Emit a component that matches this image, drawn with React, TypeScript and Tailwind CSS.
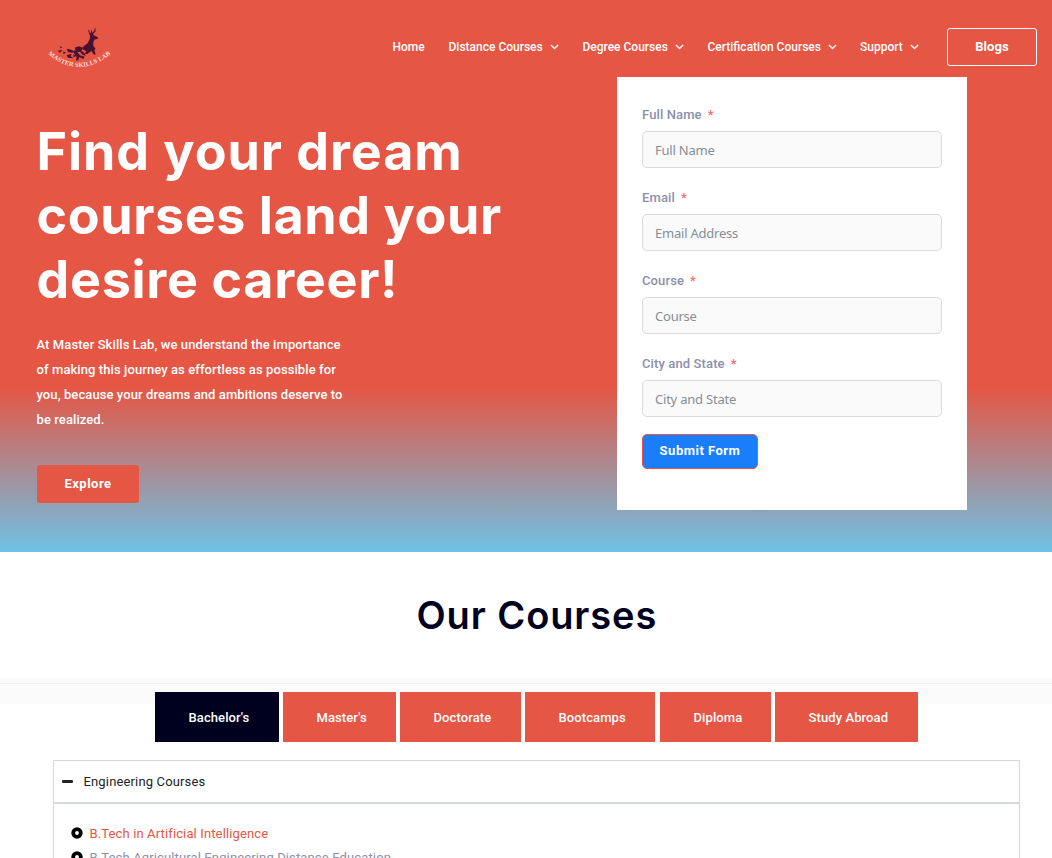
import React from "react";

const navItems = [
  { label: "Home", box: "w-[56px]", menu: false },
  { label: "Distance Courses", box: "w-[134px]", menu: true },
  { label: "Degree Courses", box: "w-[125px]", menu: true },
  { label: "Certification Courses", box: "w-[152.5px]", menu: true },
  { label: "Support", box: "w-[87px]", menu: true },
];

const fields = [
  { label: "Full Name", hint: "Full Name" },
  { label: "Email", hint: "Email Address" },
  { label: "Course", hint: "Course" },
  { label: "City and State", hint: "City and State" },
];

const tabs = [
  { label: "Bachelor's", box: "w-[124px] mr-[4px] bg-[#00001f]" },
  { label: "Master's", box: "w-[113px] mr-[4px] bg-[#e55644]" },
  { label: "Doctorate", box: "w-[121px] mr-[4px] bg-[#e55644]" },
  { label: "Bootcamps", box: "w-[130px] mr-[5px] bg-[#e55644]" },
  { label: "Diploma", box: "w-[111px] mr-[4px] bg-[#e55644]" },
  { label: "Study Abroad", box: "w-[143px] bg-[#e55644]" },
];

function Chevron() {
  return (
    <svg width="9" height="6" viewBox="0 0 9 6" fill="none" className="shrink-0">
      <path d="M0.9 1 L4.5 4.5 L8.1 1" stroke="#fff" strokeOpacity="0.9" strokeWidth="1.6" />
    </svg>
  );
}

function Logo() {
  return (
    <svg width="100" height="65" viewBox="0 0 300 195" className="ml-[30px] mt-[15px] shrink-0">
      <defs>
        <path id="arc" d="M53 117 Q 147 196 245 115" />
      </defs>
      <path
        fill="#4a1030"
        d="M180 63 L178 57 L174 46 L176 44 L180 53 L183 55 L183 46 L185 44 L187 53 L192 49 L195 39 L197 40 L196 50 L190 56 L191 61 L204 67 L203 71 L193 74 L190 81 L190 92 L197 102 L193 105 L197 118 L192 119 L184 108 L172 117 L164 116 L169 108 L157 103 L161 94 L173 85 L179 73 Z"
      />
      <path
        fill="#4a1030"
        d="M134 98 L146 94 L160 98 L154 107 L163 114 L168 122 L158 120 L150 110 L142 112 L150 121 L164 125 L160 132 L148 127 L144 136 L138 137 L140 126 L133 116 L128 108 L137 106 Z M110 101 L128 105 L129 113 L114 112 Z M91 93 L97 98 L91 100 Z M83 107 L98 105 L90 113 Z M99 110 L108 112 L101 118 Z M110 121 L125 116 L122 124 L130 130 L114 128 Z M130 118 L139 123 L130 127 Z M162 98 L174 94 L176 110 L166 108 Z"
      />
      <text fill="#ffdcd5" className="font-['Liberation_Serif'] text-[19px] font-bold">
        <textPath href="#arc" startOffset="1" textLength="208" lengthAdjust="spacingAndGlyphs">
          MASTER SKILLS LAB
        </textPath>
      </text>
    </svg>
  );
}

function Header() {
  return (
    <header className="flex h-[77px] items-start">
      <Logo />
      <nav className="ml-[262.5px] flex h-[94px] shrink-0 items-center text-[12px] font-medium">
        {navItems.map((n) => (
          <a key={n.label} className={"flex shrink-0 items-center gap-[7px] whitespace-nowrap " + n.box}>
            <span>{n.label}</span>
            {n.menu && <Chevron />}
          </a>
        ))}
      </nav>
      <a className="mt-[28px] flex h-[38px] w-[90px] shrink-0 items-center justify-center rounded-[3px] border border-white text-[13px] font-bold tracking-[0.1px]">
        Blogs
      </a>
    </header>
  );
}

function EnquiryForm() {
  return (
    <form className="ml-auto mr-[85px] h-[433px] w-[350px] shrink-0 bg-white pl-[25px] pt-[29px]">
      {fields.map((f) => (
        <div key={f.label} className="h-[83px]">
          <label className="block h-[25px] text-[13px] font-medium leading-[18px] tracking-[0.12px] text-[#8b90ab]">
            {f.label}
            <span className="ml-[6px] text-[#f56c6c]">*</span>
          </label>
          <div className="flex h-[37px] w-[300px] items-center rounded-[5px] border border-[#dadbdd] bg-[#fafafa] pl-3 pt-[2px] font-['Noto_Sans',sans-serif] text-[13px] tracking-[-0.22px] text-[#868e96]">
            <span>{f.hint}</span>
          </div>
        </div>
      ))}
      <button
        type="button"
        className="-mt-[4px] block h-[35px] w-[116px] rounded-[5px] border border-[#e55644] bg-[#1a7efb] pb-[3px] text-[13px] font-bold leading-none tracking-[0.5px] text-white"
      >
        Submit Form
      </button>
    </form>
  );
}

function Hero() {
  return (
    <section className="h-[552px] bg-[linear-gradient(180deg,#e55644_70%,#6ec1e4_100%)] text-white">
      <Header />
      <div className="flex">
        <div className="pl-[36.5px] pt-[43px]">
          <h1 className="whitespace-nowrap font-['Inter',sans-serif] text-[52px] font-bold leading-[64px]">
            <span className="block tracking-[0.95px]">Find your dream</span>
            <span className="block tracking-[0.6px]">courses land your</span>
            <span className="block tracking-[0.7px]">desire career!</span>
          </h1>
          <p className="mt-[20px] whitespace-nowrap text-[13px] font-medium leading-[25px] tracking-[0.09px]">
            At Master Skills Lab, we understand the importance
            <br />
            of making this journey as effortless as possible for
            <br />
            you, because your dreams and ambitions deserve to
            <br />
            be realized.
          </p>
          <a className="ml-[0.5px] mt-[33px] flex h-[38px] w-[102px] items-center justify-center rounded-[3px] bg-[#e55644] text-[13px] font-bold tracking-[0.5px]">
            Explore
          </a>
        </div>
        <EnquiryForm />
      </div>
    </section>
  );
}

function Bullet() {
  return (
    <svg width="12" height="12" viewBox="0 0 12 12" className="-mt-[2px] mr-[6.5px] shrink-0">
      <circle cx="6" cy="6" r="3.8" fill="none" stroke="#000" strokeWidth="3.8" />
    </svg>
  );
}

function Courses() {
  return (
    <section>
      <h2 className="h-[126px] pl-[416.5px] pt-[39px] font-['Inter',sans-serif] text-[38px] font-semibold leading-[48px] tracking-[0.9px] text-[#00001f]">
        Our Courses
      </h2>
      <div className="h-[26px] bg-[#fbfbfb] pt-[5px]">
        <div className="h-px bg-[#ececec]" />
        <div className="flex pl-[155px] pt-[8px]">
          {tabs.map((t) => (
            <div
              key={t.label}
              className={"flex h-[50px] shrink-0 items-center whitespace-nowrap pl-[33.5px] pt-[2px] text-[13px] font-medium tracking-[0.1px] text-white " + t.box}
            >
              {t.label}
            </div>
          ))}
        </div>
      </div>
      <div className="ml-[53px] mt-[56px] w-[967px] border border-[#d5d8dc]">
        <div className="flex h-[43px] items-center border-b-2 border-[#d5d8dc] pl-[8px] text-[13px] tracking-[0.15px] text-[#222328]">
          <span className="mr-[10.5px] h-[3px] w-[11px] rounded-[1px] bg-[#222328]" />
          <span className="pt-px">Engineering Courses</span>
        </div>
        <ul className="pl-[17px] pt-[18px] text-[13px] leading-[24.5px] tracking-[0.13px]">
          <li className="flex items-center text-[#e55644]">
            <Bullet />
            <span>B.Tech in Artificial Intelligence</span>
          </li>
          <li className="-mt-px flex items-center text-[#8b90ab]">
            <Bullet />
            <span>B.Tech Agricultural Engineering Distance Education</span>
          </li>
        </ul>
      </div>
    </section>
  );
}

export default function App() {
  return (
    <main className="h-[858px] w-[1052px] overflow-hidden bg-white font-['Roboto',sans-serif]">
      <Hero />
      <Courses />
    </main>
  );
}
